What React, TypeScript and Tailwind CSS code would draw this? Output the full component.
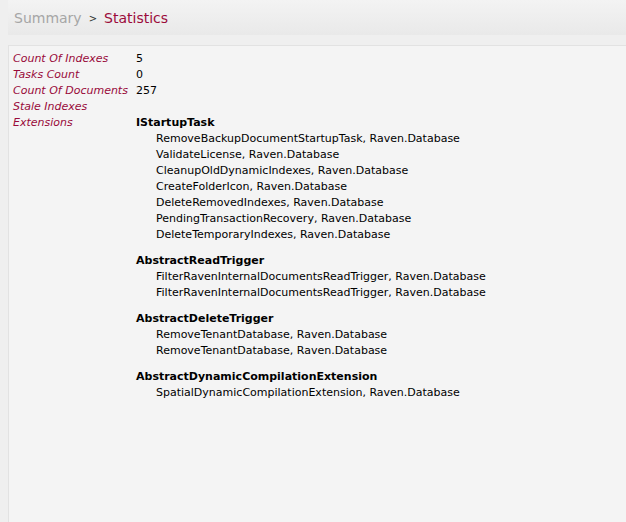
import React from "react";

const STATS = [
  { label: "Count Of Indexes", value: "5" },
  { label: "Tasks Count", value: "0" },
  { label: "Count Of Documents", value: "257" },
  { label: "Stale Indexes", value: "" },
];

const EXTENSIONS = [
  {
    name: "IStartupTask",
    items: [
      "RemoveBackupDocumentStartupTask",
      "ValidateLicense",
      "CleanupOldDynamicIndexes",
      "CreateFolderIcon",
      "DeleteRemovedIndexes",
      "PendingTransactionRecovery",
      "DeleteTemporaryIndexes",
    ],
  },
  {
    name: "AbstractReadTrigger",
    items: ["FilterRavenInternalDocumentsReadTrigger", "FilterRavenInternalDocumentsReadTrigger"],
  },
  {
    name: "AbstractDeleteTrigger",
    items: ["RemoveTenantDatabase", "RemoveTenantDatabase"],
  },
  {
    name: "AbstractDynamicCompilationExtension",
    items: ["SpatialDynamicCompilationExtension"],
  },
];

const font = { fontFamily: '"DejaVu Sans", Verdana, sans-serif' };

export default function App() {
  return (
    <div className="w-[626px] h-[522px] bg-[#efefef] pl-2 flex flex-col overflow-hidden" style={font}>
      {/* breadcrumb */}
      <div className="h-[35px] bg-gradient-to-b from-[#f3f3f3] to-[#e9e9e9] flex items-center pl-[6px] pt-[1px] shrink-0">
        <span className="text-[14px] text-[#a6a6a6]">Summary</span>
        <span className="text-[10px] text-[#333] ml-[7px] mr-[7px]">&gt;</span>
        <span className="text-[14px] text-[#9b0b3b]">Statistics</span>
      </div>
      <div className="h-[10px] shrink-0" />

      {/* stats panel */}
      <div className="flex-1 bg-[#f4f4f4] border-l border-t border-[#e2e2e2] pl-[4px] pt-[5px] text-[11px] leading-[16px] text-black">
        {STATS.map((s) => (
          <div key={s.label} className="flex">
            <div className="w-[123px] italic text-[#990a3a]">{s.label}</div>
            <div>{s.value}</div>
          </div>
        ))}
        <div className="flex">
          <div className="w-[123px] italic text-[#990a3a]">Extensions</div>
          <div className="flex flex-col gap-[10px]">
            {EXTENSIONS.map((ext) => (
              <div key={ext.name}>
                <div className="font-bold">{ext.name}</div>
                {ext.items.map((item, i) => (
                  <div key={i} className="pl-[20px]">
                    {item}, Raven.Database
                  </div>
                ))}
              </div>
            ))}
          </div>
        </div>
      </div>
    </div>
  );
}
